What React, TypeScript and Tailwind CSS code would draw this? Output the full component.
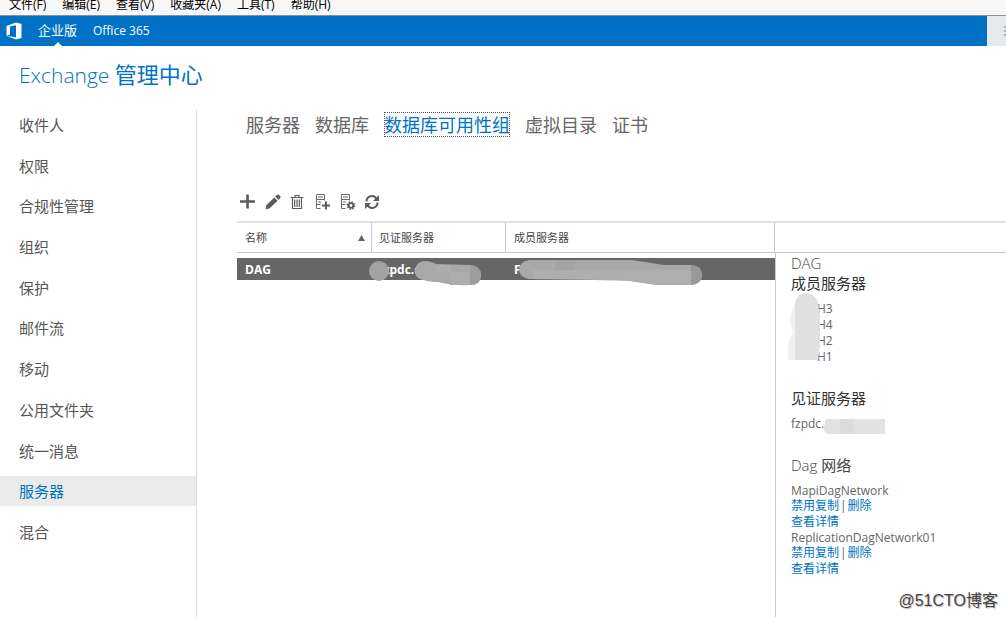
import React, { useState } from "react";

const menus = ["文件(F)", "编辑(E)", "查看(V)", "收藏夹(A)", "工具(T)", "帮助(H)"];

const sections = [
  "收件人",
  "权限",
  "合规性管理",
  "组织",
  "保护",
  "邮件流",
  "移动",
  "公用文件夹",
  "统一消息",
  "服务器",
  "混合",
];

const tabs = ["服务器", "数据库", "数据库可用性组", "虚拟目录", "证书"];

const networks = ["MapiDagNetwork", "ReplicationDagNetwork01"];

function OfficeLogo() {
  return (
    <svg viewBox="0 0 16 18" className="h-[18px] w-4" aria-hidden="true">
      <path
        fill="#fff"
        fillRule="evenodd"
        d="M0.500 4 10 0.500 15.500 2v14l-5.500 1.500-9.500-3.500 9.500 1.200V3.200L4 4.600v8L0.500 14z"
      />
    </svg>
  );
}

function ServerRack() {
  return (
    <g fill="none" stroke="#6a6a6a" strokeWidth="1">
      <path d="M5.500 14.500h-4v-14h8v6M1.500 5.500h8M1.500 10.500h4" />
      <path d="M3 3h5M3 8h3" strokeWidth="1.200" />
    </g>
  );
}

const tools: { label: string; art: React.ReactNode }[] = [
  {
    label: "新建",
    art: <path d="M7.500 0.500v14M0 7.500h15" stroke="#5c5c5c" strokeWidth="2.600" />,
  },
  {
    label: "编辑",
    art: (
      <g fill="#5c5c5c">
        <path d="M0.500 15.500 1.500 11l7.800-7.500 3.300 3.300L4.800 14.300z" />
        <path d="M10.200 2.600 12 0.900q1-.8 2 0l1.200 1.200q.8 1 0 1.900l-1.700 1.900z" />
      </g>
    ),
  },
  {
    label: "删除",
    art: (
      <g fill="none" stroke="#5c5c5c" strokeWidth="1.200">
        <path d="M0.500 3.500h13M5 3V1.500h4V3M2.500 4v10.500h9V4" />
        <path d="M4.700 5.500v7.500M7 5.500v7.500M9.300 5.500v7.500" />
      </g>
    ),
  },
  {
    label: "管理成员",
    art: (
      <>
        <ServerRack />
        <path d="M11 7.500v8M7 11.500h8" stroke="#5c5c5c" strokeWidth="2" />
      </>
    ),
  },
  {
    label: "设置",
    art: (
      <>
        <ServerRack />
        <circle cx="11" cy="11.500" r="2.300" fill="none" stroke="#5c5c5c" strokeWidth="1.800" />
        <circle
          cx="11"
          cy="11.500"
          r="3.700"
          fill="none"
          stroke="#5c5c5c"
          strokeWidth="1.400"
          strokeDasharray="1.500 1.406"
        />
      </>
    ),
  },
  {
    label: "刷新",
    art: (
      <>
        <g fill="none" stroke="#5c5c5c" strokeWidth="2">
          <path d="M1.500 7.500A5.300 5.300 0 0 1 11.500 5" />
          <path d="M12.500 8.500A5.300 5.300 0 0 1 2.500 11" />
        </g>
        <path d="M14 1v6H8zM0 15V9h6z" fill="#5c5c5c" />
      </>
    ),
  },
];

function WitnessMask() {
  return (
    <svg viewBox="0 0 114 30" className="absolute -left-[3px] top-0 h-[30px] w-[114px]" aria-hidden="true">
      <circle cx="10" cy="13" r="10" fill="#a2a2a2" />
      <path
        d="M46 12q1-9 11-9 5 0 10 3l34 1q11 1 11 10 0 10-11 10-14 1-32-3-12 0-20-4-3-3-3-8z"
        fill="#a8a8a8"
      />
      <path d="M67 7h14v7H67zM81 14h20v13H81z" fill="#adadad" />
      <path d="M101 7q11 1 11 10 0 10-11 10z" fill="#9c9c9c" />
    </svg>
  );
}

function MemberMask() {
  return (
    <svg viewBox="0 0 200 30" className="absolute -left-px top-0 h-[30px] w-[200px]" aria-hidden="true">
      <path
        d="M24 2h103l32 5h27q11 1 11 10t-11 10h-34l-26-4q-60-2-102-2-10-2-10-9.500T24 2z"
        fill="#a9a9a9"
      />
      <path d="M28 12h96v9.800L28 21zM124 12h62v15h-34l-28-4z" fill="#aeaeae" />
      <path d="M50 2h20v10H50z" fill="#a3a3a3" />
      <path d="M186 7q11 1 11 10t-11 10z" fill="#999" />
    </svg>
  );
}

function NetworkEntry({ name }: { name: string }) {
  return (
    <li>
      <p className="leading-[15px]">{name}</p>
      <p className="flex leading-4">
        <a href="#disable" className="text-[#0072c6]">禁用复制</a>
        <span className="px-px">|</span>
        <a href="#remove" className="text-[#0072c6]">删除</a>
      </p>
      <p className="leading-4">
        <a href="#details" className="text-[#0072c6]">查看详情</a>
      </p>
    </li>
  );
}

export default function App() {
  const [section, setSection] = useState("服务器");
  const [tab, setTab] = useState("数据库可用性组");

  return (
    <div className="relative flex min-h-screen flex-col overflow-hidden bg-white font-['Open_Sans','Noto_Sans_CJK_SC',sans-serif] text-xs text-[#666]">
      <div className="flex h-4 items-end gap-4 overflow-hidden border-b border-[#8a8f94] bg-[#f7f7f7] px-[9px] pb-0.5 text-black">
        {menus.map((m) => (
          <button key={m} type="button" className="shrink-0 leading-4">
            {m}
          </button>
        ))}
      </div>

      <header className="flex h-[30px] bg-[#0072c6] text-white">
        <div className="flex flex-1 items-center pl-1.5">
          <OfficeLogo />
          <nav className="ml-4 flex h-full gap-4 text-[13px]">
            <a href="#enterprise" className="relative flex items-center">
              企业版
              <svg viewBox="0 0 8 4" className="absolute bottom-0 left-4 h-1 w-2" aria-hidden="true">
                <path d="M0 4 4 0l4 4z" fill="#fff" />
              </svg>
            </a>
            <a href="#office365" className="flex items-center text-xs">
              Office 365
            </a>
          </nav>
        </div>
        <div className="flex w-[19px] items-center justify-end bg-[#e6eaee] text-[#666]">
          <svg viewBox="0 0 2 10" className="h-2.5 w-0.5" aria-hidden="true">
            <path d="M0 1h2M0 5h2M0 9h2" stroke="#777" />
          </svg>
        </div>
      </header>

      <h1 className="px-[19px] pt-3 text-[21px] font-light leading-8 text-[#0072c6]">
        Exchange <span className="text-[22px] font-normal">管理中心</span>
      </h1>

      <div className="mt-[19px] flex flex-1">
        <nav className="w-[197px] shrink-0 border-r border-[#ddd]">
          <ul className="flex h-[437px] flex-col justify-between">
            {sections.map((s) => (
              <li key={s}>
                <button
                  type="button"
                  onClick={() => setSection(s)}
                  className={
                    s === section
                      ? "block w-full bg-[#ebebeb] pl-[19px] text-left text-[15px] leading-[30px] text-[#0072c6]"
                      : "block w-full pl-[19px] text-left text-[15px] leading-[30px] text-[#555]"
                  }
                >
                  {s}
                </button>
              </li>
            ))}
          </ul>
        </nav>

        <main className="flex min-w-0 flex-1 flex-col pl-10">
          <div className="flex gap-[15px] pl-[9px] pt-0.5 text-lg">
            {tabs.map((t) => (
              <button
                key={t}
                type="button"
                onClick={() => setTab(t)}
                className={
                  t === tab
                    ? "shrink-0 pt-px leading-6 text-[#0072c6] outline-1 -outline-offset-1 outline-dotted outline-[#555]"
                    : "shrink-0 pt-px leading-6"
                }
              >
                {t}
              </button>
            ))}
          </div>

          <div className="mt-[57px] flex gap-[9px] pl-[3px]">
            {tools.map((t) => (
              <button key={t.label} type="button" aria-label={t.label} className="size-4">
                <svg viewBox="0 0 16 16" className="size-4" aria-hidden="true">
                  {t.art}
                </svg>
              </button>
            ))}
          </div>

          <div className="mt-[11px] flex flex-1">
            <table className="h-fit flex-1 table-fixed border-separate border-spacing-0 text-left">
              <colgroup>
                <col className="w-[135px]" />
                <col className="w-[134px]" />
                <col />
              </colgroup>
              <thead>
                <tr className="h-8 text-[11px] text-[#444]">
                  <th className="border-b border-r border-t-2 border-b-[#c6c6c6] border-r-[#ccc] border-t-[#e1e1e1] pl-2 pr-1.5 pt-px font-normal">
                    <span className="flex items-center justify-between">
                      名称
                      <svg viewBox="0 0 7 6" className="h-1.5 w-[7px]" aria-hidden="true">
                        <path d="M3.500 0 7 6H0z" fill="#666" />
                      </svg>
                    </span>
                  </th>
                  <th className="border-b border-r border-t-2 border-b-[#c6c6c6] border-r-[#ccc] border-t-[#e1e1e1] pl-[7px] pt-px font-normal">
                    见证服务器
                  </th>
                  <th className="border-b border-r border-t-2 border-b-[#c6c6c6] border-r-[#ccc] border-t-[#e1e1e1] pl-2 pt-px font-normal">
                    成员服务器
                  </th>
                </tr>
              </thead>
              <tbody className="before:block before:h-[5px] before:content-['']">
                <tr className="h-[22px] bg-[#666] font-bold text-white">
                  <td className="pl-2 pt-0.5">DAG</td>
                  <td className="relative pl-[7px] pt-0.5">
                    fzpdc.c
                    <WitnessMask />
                  </td>
                  <td className="relative pl-2 pt-0.5">
                    F
                    <MemberMask />
                  </td>
                </tr>
              </tbody>
            </table>

            <aside className="flex w-[231px] shrink-0 flex-col">
              <div className="h-8 border-b border-t-2 border-b-[#c6c6c6] border-t-[#e1e1e1]" />
              <div className="flex-1 border-l border-[#ccc] pb-8 pl-[15px]">
                <h2 className="text-[15px] font-light leading-5 text-[#444]">DAG</h2>
                <h3 className="text-[15px] leading-5 text-[#333]">成员服务器</h3>
                <ul className="relative mt-2 pl-[26px] leading-4">
                  <li>H3</li>
                  <li>H4</li>
                  <li>H2</li>
                  <li>H1</li>
                  <svg viewBox="0 0 34 70" className="absolute -left-[3px] -top-[9px] h-[70px] w-[34px]" aria-hidden="true">
                    <path d="M8 12Q1 20 2 32l3 8q-4 6-5 15v13h10z" fill="#f1f1f1" />
                    <path d="M7 10Q10 1 18 1t12 9l2 14v30l-2 14H7z" fill="#e0e0e0" />
                  </svg>
                </ul>
                <h3 className="mt-[23px] text-[15px] leading-5 text-[#333]">见证服务器</h3>
                <p className="relative mt-2 leading-4">
                  fzpdc.
                  <svg viewBox="0 0 62 16" className="absolute left-8 top-[3px] h-4 w-[62px]" aria-hidden="true">
                    <path d="M3 0h59v15H6q-6-1-5-8z" fill="#e2e2e2" />
                    <path d="M17 0h14v15H17z" fill="#dcdcdc" />
                  </svg>
                </p>
                <h3 className="mt-[23px] text-[15px] font-light leading-5 text-[#444]">
                  Dag <span className="font-normal">网络</span>
                </h3>
                <ul className="mt-2">
                  {networks.map((n) => (
                    <NetworkEntry key={n} name={n} />
                  ))}
                </ul>
              </div>
            </aside>
          </div>
        </main>
      </div>

      <div className="pointer-events-none absolute bottom-1.5 right-2 font-['Liberation_Sans','Noto_Sans_CJK_SC',sans-serif] text-base leading-5 text-[#444] [text-shadow:1px_1px_1px_#bbb]">
        @51CTO博客
      </div>
    </div>
  );
}
